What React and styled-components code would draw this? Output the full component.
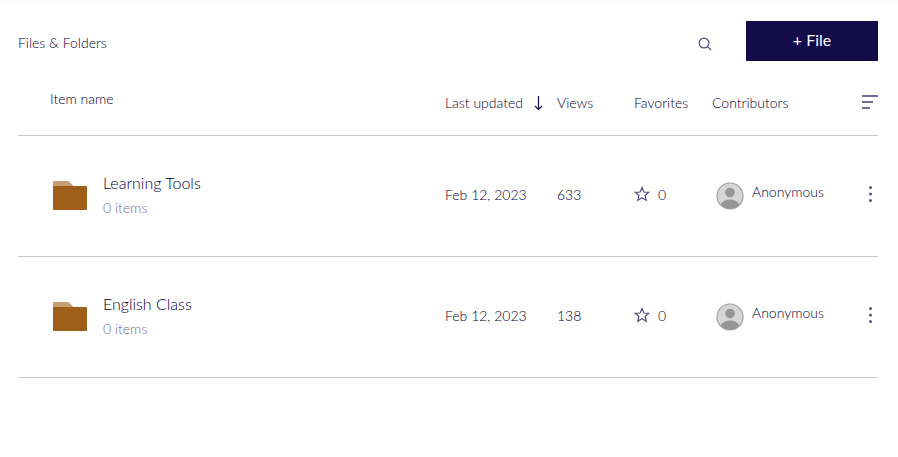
import React from "react";
import styled, { createGlobalStyle } from "styled-components";

const navy = "#130b4a";
const ink = "#050033";
const softInk = "#716c92";
const iconInk = "#564f7e";

const GlobalStyle = createGlobalStyle`
  *, *::before, *::after { box-sizing: border-box; }
  body {
    margin: 0;
    background: #ffffff;
    color: ${ink};
    font-family: Lato, "Open Sans", sans-serif;
    font-weight: 300;
    font-size: 14px;
    line-height: 20px;
  }
  button { font: inherit; color: inherit; cursor: pointer; }
`;

const Page = styled.main`
  border-top: 1px solid #fdf7f3;
  padding: 20px 20px 0 18px;
`;

const Toolbar = styled.header`
  display: flex;
  align-items: center;
  height: 40px;
`;

const Title = styled.h1`
  flex: 1;
  margin: 0;
  padding-top: 4px;
  font-size: 14px;
  font-weight: 300;
`;

const IconButton = styled.button`
  display: inline-flex;
  align-items: center;
  justify-content: center;
  padding: 0;
  border: 0;
  background: none;

  svg { display: block; }
`;

const SearchButton = styled(IconButton)`
  width: 20px;
  height: 20px;
  margin: 6px 31px 0 0;
`;

const FileButton = styled.button`
  width: 132px;
  height: 40px;
  padding: 0 0 2px;
  border: 0;
  background: ${navy};
  color: #ffffff;
  font-size: 16px;
  font-weight: 400;
`;

const Table = styled.table`
  width: 100%;
  margin-top: 11px;
  table-layout: fixed;
  border-collapse: separate;
  border-spacing: 0;
`;

const Column = styled.col`
  width: ${(p) => p.$width || "auto"};
`;

const HeadCell = styled.th`
  height: 64px;
  padding: ${(p) => (p.$lead ? "0 0 10px 32px" : "0 0 2px")};
  border-bottom: 1px solid #cbcbcb;
  font-weight: 300;
  text-align: left;
  vertical-align: middle;
  white-space: nowrap;
`;

const Cell = styled.td`
  height: 121px;
  padding: ${(p) => (p.$lead ? "0 0 2px 35px" : "0 0 2px")};
  border-bottom: 1px solid #cbcbcb;
  vertical-align: middle;
  white-space: nowrap;
`;

const SortButton = styled(IconButton)`
  gap: 11px;
`;

const ActionButton = styled(IconButton)`
  display: flex;
  justify-content: flex-start;
  width: 16px;
  height: 24px;
`;

const Item = styled.div`
  display: flex;
  align-items: center;
  gap: 16px;
`;

const ItemName = styled.a`
  display: block;
  padding: 1px 0;
  color: ${ink};
  font-size: 16px;
  line-height: 24px;
  text-decoration: none;
`;

const ItemCount = styled.div`
  color: ${softInk};
  line-height: 24px;
`;

const FavoriteButton = styled(IconButton)`
  gap: 8px;
`;

const FavoriteCount = styled.span`
  padding-top: 2px;
`;

const Contributor = styled.div`
  display: flex;
  align-items: center;
  gap: 8px;
  padding: 2px 0 0 4px;
`;

const ContributorName = styled.span`
  padding-bottom: 8px;
`;

const SearchIcon = () => (
  <svg width="14" height="14" viewBox="0 0 14 14" fill="none" stroke={iconInk} strokeWidth="1.2" aria-hidden="true">
    <circle cx="6" cy="6" r="4.9" />
    <path d="M9.5 9.5 13 13" />
  </svg>
);

const ArrowIcon = () => (
  <svg width="9" height="16" viewBox="0 0 9 16" fill="none" stroke={navy} strokeWidth="1.2" aria-hidden="true">
    <path d="M4.5 1v13.500M1 11l3.500 3.500L8 11" />
  </svg>
);

const SortLinesIcon = () => (
  <svg width="16" height="16" viewBox="0 0 16 16" fill={softInk} aria-hidden="true">
    <path d="M0 0h16v2H0zM0 6h11v2H0zM0 12h8v2H0z" />
  </svg>
);

const FolderIcon = () => (
  <svg width="34" height="29" viewBox="0 0 34 29" aria-hidden="true">
    <path fill="#c79f75" d="M0 7V1q0-1 1-1h13.5q1 0 1.7.7L20.5 5v2z" />
    <path fill="#9e5f1a" d="M0 5h33q1 0 1 1v22q0 1-1 1H1q-1 0-1-1z" />
  </svg>
);

const StarIcon = () => (
  <svg width="16" height="16" viewBox="0 0 16 16" fill="none" stroke={iconInk} strokeWidth="1.2" aria-hidden="true">
    <path d="M8 1.6 9.9 6l4.900.3-3.700 3.200 1.100 4.800L8 11.700l-4.200 2.600 1.100-4.800L1.200 6.300 6.100 6z" />
  </svg>
);

const AvatarIcon = () => (
  <svg width="28" height="28" viewBox="0 0 28 28" aria-hidden="true">
    <circle cx="14" cy="14" r="13" fill="#d6d6d6" />
    <circle cx="14" cy="10.5" r="4.8" fill="#969696" />
    <path fill="#969696" d="M4.5 22.5C6.5 19 10 17.5 14 17.5s7.5 1.5 9.5 5C21 25.5 17.5 27 14 27s-7-1.5-9.5-4.5z" />
    <circle cx="14" cy="14" r="13" fill="none" stroke="#a0a0a0" strokeWidth="1.2" />
  </svg>
);

const DotsIcon = () => (
  <svg width="16" height="18" viewBox="0 0 16 18" fill={iconInk} aria-hidden="true">
    <circle cx="8.5" cy="1.5" r="1.5" />
    <circle cx="8.5" cy="8" r="1.5" />
    <circle cx="8.5" cy="14.5" r="1.5" />
  </svg>
);

const folders = [
  { name: "Learning Tools", items: 0, updated: "Feb 12, 2023", views: 633, favorites: 0, contributor: "Anonymous" },
  { name: "English Class", items: 0, updated: "Feb 12, 2023", views: 138, favorites: 0, contributor: "Anonymous" },
];

function FolderRow({ folder }) {
  return (
    <tr>
      <Cell $lead>
        <Item>
          <FolderIcon />
          <div>
            <ItemName href="#">{folder.name}</ItemName>
            <ItemCount>{folder.items} items</ItemCount>
          </div>
        </Item>
      </Cell>
      <Cell>{folder.updated}</Cell>
      <Cell>{folder.views}</Cell>
      <Cell>
        <FavoriteButton type="button" aria-label={`Favorite ${folder.name}`}>
          <StarIcon />
          <FavoriteCount>{folder.favorites}</FavoriteCount>
        </FavoriteButton>
      </Cell>
      <Cell>
        <Contributor>
          <AvatarIcon />
          <ContributorName>{folder.contributor}</ContributorName>
        </Contributor>
      </Cell>
      <Cell>
        <ActionButton type="button" aria-label={`Actions for ${folder.name}`}>
          <DotsIcon />
        </ActionButton>
      </Cell>
    </tr>
  );
}

export default function App() {
  return (
    <>
      <GlobalStyle />
      <Page>
        <Toolbar>
          <Title>Files &amp; Folders</Title>
          <SearchButton type="button" aria-label="Search">
            <SearchIcon />
          </SearchButton>
          <FileButton type="button">+ File</FileButton>
        </Toolbar>
        <Table>
          <colgroup>
            <Column />
            <Column $width="112px" />
            <Column $width="77px" />
            <Column $width="78px" />
            <Column $width="150px" />
            <Column $width="16px" />
          </colgroup>
          <thead>
            <tr>
              <HeadCell $lead>Item name</HeadCell>
              <HeadCell>
                <SortButton type="button">
                  Last updated
                  <ArrowIcon />
                </SortButton>
              </HeadCell>
              <HeadCell>Views</HeadCell>
              <HeadCell>Favorites</HeadCell>
              <HeadCell>Contributors</HeadCell>
              <HeadCell>
                <ActionButton type="button" aria-label="Sort">
                  <SortLinesIcon />
                </ActionButton>
              </HeadCell>
            </tr>
          </thead>
          <tbody>
            {folders.map((folder) => (
              <FolderRow key={folder.name} folder={folder} />
            ))}
          </tbody>
        </Table>
      </Page>
    </>
  );
}
